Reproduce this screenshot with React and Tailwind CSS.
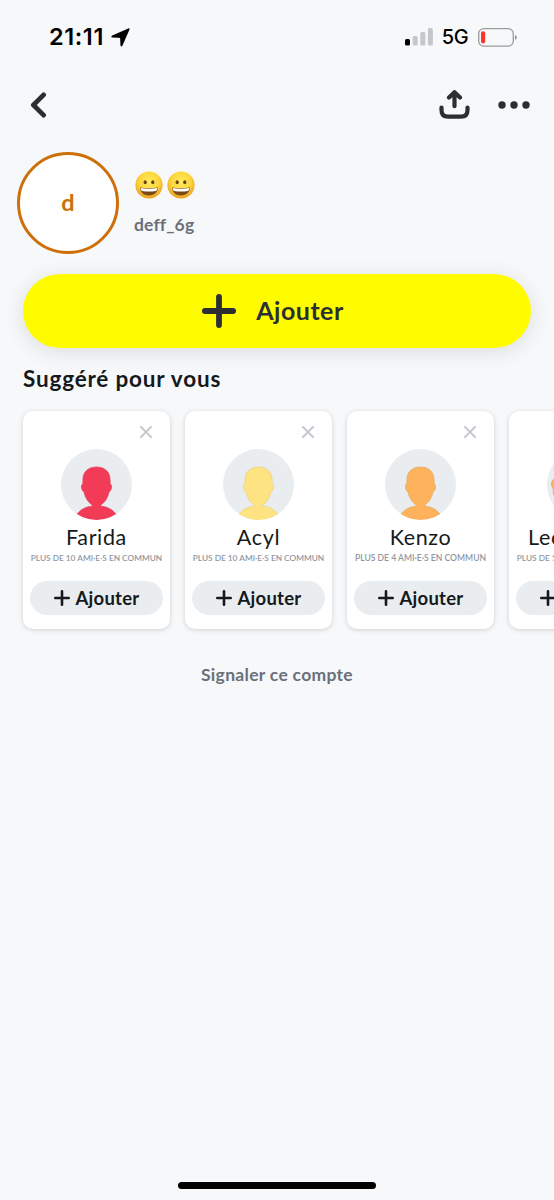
import React, { useState } from 'react';

const suggestions = [
  { name: 'Farida', common: 'PLUS DE 10 AMI·E·S EN COMMUN', size: 'text-[8.3px]', color: '#f23b57', edge: '#ee4560' },
  { name: 'Acyl', common: 'PLUS DE 10 AMI·E·S EN COMMUN', size: 'text-[8.3px]', color: '#fee382', edge: '#e9d48c' },
  { name: 'Kenzo', common: 'PLUS DE 4 AMI·E·S EN COMMUN', size: 'text-[8.6px]', color: '#feb25c', edge: '#e5ab6b' },
  { name: 'Leo Martin', common: 'PLUS DE 10 AMI·E·S EN COMMUN', size: 'text-[8.3px]', color: '#feb25c', edge: '#e5ab6b', hair: true },
];

function Emoji() {
  return (
    <svg className="h-7 w-7" viewBox="0 0 28 28">
      <defs>
        <radialGradient id="face" cx="50%" cy="38%" r="62%">
          <stop offset="0" stopColor="#ffee5c" />
          <stop offset="0.6" stopColor="#fdd53b" />
          <stop offset="1" stopColor="#eb9a1c" />
        </radialGradient>
      </defs>
      <circle cx="14" cy="14" r="13.6" fill="url(#face)" />
      <ellipse cx="10.2" cy="11.2" rx="1.6" ry="2" fill="#6d4217" />
      <ellipse cx="17.8" cy="11.2" rx="1.6" ry="2" fill="#6d4217" />
      <path d="M5 16.4Q14 18 23 16.4C22.6 21.6 19 24.4 14 24.4S5.4 21.6 5 16.4Z" fill="#7a4a16" />
      <path d="M5.6 16.9Q14 18.4 22.4 16.9C22.2 18.6 21.6 19.6 20.8 19.9Q14 21 7.2 19.9C6.4 19.6 5.8 18.6 5.6 16.9Z" fill="#fff" />
    </svg>
  );
}

function Silhouette({ color, edge, hair }) {
  return (
    <svg className="h-[71px] w-[71px] rounded-full bg-[#e9edf0]" viewBox="0 0 71 71">
      <g fill={color} stroke={edge} strokeWidth="0.8">
        {hair && <path d="M35.5 16C19 13 11 24 5 32.5C3.6 35 4.6 38 6 39L6.5 46C10 49 12 48 14 48L57 48C64 43 67 36 62 30C58 20 50 14 35.5 16Z" />}
        <path d="M35.5 18C26.5 18 21.9 23.5 21.9 31V35.2C20 35 20.2 38.5 21.2 41C21.9 42.6 22.6 42.3 23 43.2C24.3 49 27 53.3 31.2 56V57.2C25 57.6 18.5 60.5 15 67V74H56V67C52.5 60.5 46 57.6 39.8 57.2V56C44 53.3 46.7 49 48 43.2C48.4 42.3 49.1 42.6 49.8 41C50.8 38.5 51 35 49.1 35.2V31C49.1 23.5 44.5 18 35.5 18Z" />
      </g>
    </svg>
  );
}

function SuggestionCard({ person, onDismiss }) {
  return (
    <div className="flex h-[218px] w-[147px] shrink-0 flex-col items-center rounded-[10px] bg-white shadow-[0_1px_5px_rgba(0,0,0,0.16)]">
      <button className="mt-[15px] mr-[18px] self-end" onClick={onDismiss}>
        <svg className="h-3 w-3" viewBox="0 0 12 12" stroke="#c8cad2" strokeWidth="2.1" strokeLinecap="round">
          <path d="M1 1L11 11M11 1L1 11" />
        </svg>
      </button>
      <div className="mt-[11px]">
        <Silhouette color={person.color} edge={person.edge} hair={person.hair} />
      </div>
      <div className="mt-1 h-[26px] whitespace-nowrap text-[21.5px] leading-[26px] tracking-[0.65px] text-[#16191c]">{person.name}</div>
      <div className={`mt-0.5 h-3 whitespace-nowrap leading-3 font-semibold text-[#9297a2] ${person.size}`}>{person.common}</div>
      <button className="mt-[17px] flex h-[34px] w-[133px] items-center justify-center gap-1.5 rounded-full bg-[#e9edf0] text-[#16191c]">
        <svg className="h-4 w-4" viewBox="0 0 16 16" stroke="currentColor" strokeWidth="2.6" strokeLinecap="round">
          <path d="M8 1.3V14.7M1.3 8H14.7" />
        </svg>
        <span className="text-[18.5px] leading-6 font-bold tracking-[0.25px]">Ajouter</span>
      </button>
    </div>
  );
}

export default function App() {
  const [people, setPeople] = useState(suggestions);

  const dismiss = (name) => {
    setPeople((prev) => prev.filter((p) => p.name !== name));
  };

  return (
    <div className="flex h-[1200px] w-full flex-col overflow-hidden bg-[#f7f8fa] font-['Lato',sans-serif]">

      {/* Status bar */}
      <div className="flex h-[74px] items-center justify-between pr-[37px] pl-[49px] font-['Inter',sans-serif] text-black">
        <div className="flex items-center gap-[7px]">
          <span className="text-[23.5px] leading-7 font-semibold tracking-[0.6px]">21:11</span>
          <svg className="h-[19px] w-[19px]" viewBox="0 0 19 19">
            <path d="M17.2 .5Q19 -.1 18.4 1.8L11.5 17.4Q10.4 19.6 9.4 17.3L9.2 10.8Q9.1 9.9 8.2 9.8L1.5 9.6Q-.8 8.8 1.3 7.5Z" />
          </svg>
        </div>
        <div className="flex items-center">
          <svg className="h-[18px] w-7" viewBox="0 0 28 18">
            <rect x="0" y="11" width="5" height="6.6" rx="1.5" fill="#000" />
            <rect x="7.7" y="8" width="5" height="9.6" rx="1.5" fill="#c6c7c9" />
            <rect x="15.3" y="4" width="5" height="13.6" rx="1.5" fill="#c6c7c9" />
            <rect x="22.9" y="0" width="5" height="17.6" rx="1.5" fill="#c6c7c9" />
          </svg>
          <span className="ml-[9px] text-[20px] leading-6 font-medium tracking-[-0.3px]">5G</span>
          <svg className="ml-[9.5px] h-[19px] w-[39px]" viewBox="0 0 39 19">
            <rect x="0.7" y="0.7" width="34.6" height="17.4" rx="5" fill="none" stroke="#9b9c9e" strokeWidth="1.3" />
            <rect x="3" y="3.2" width="4.2" height="12.2" rx="1.8" fill="#fa352d" />
            <path d="M37 7Q38.8 7.6 38.8 9.4T37 11.8Z" fill="#8e8f91" />
          </svg>
        </div>
      </div>

      {/* Navigation */}
      <div className="flex h-[61px] items-center justify-between pr-6 pl-[30px] text-[#2b2f34]">
        <svg className="h-[26px] w-[17px]" viewBox="0 0 17 26" fill="none" stroke="currentColor" strokeWidth="4.8" strokeLinecap="round" strokeLinejoin="round">
          <path d="M13.6 2.9L3.4 13L13.6 23.1" />
        </svg>
        <div className="flex items-center gap-7">
          <svg className="h-[30px] w-[31px]" viewBox="0 0 31 30" fill="none" stroke="currentColor" strokeWidth="4.2" strokeLinecap="round" strokeLinejoin="round">
            <path d="M2.5 17.5V20Q2.5 26.7 9 26.7H22Q28.5 26.7 28.5 20V17.5" />
            <path d="M15.5 16.2V3.5M10 7.6L15.5 2.2L21 7.6" />
          </svg>
          <svg className="h-2 w-8" viewBox="0 0 32 8" fill="currentColor">
            <circle cx="4" cy="4" r="3.7" />
            <circle cx="16" cy="4" r="3.7" />
            <circle cx="28" cy="4" r="3.7" />
          </svg>
        </div>
      </div>

      {/* Profile */}
      <div className="mt-[17px] flex pl-[17px]">
        <div className="flex h-[102px] w-[102px] items-center justify-center rounded-full border-3 border-[#ce7009] bg-white text-[23.5px] font-bold text-[#ce7009]">
          d
        </div>
        <div className="ml-[15px] pt-[19px]">
          <div className="flex gap-[3.5px] pl-px">
            <Emoji />
            <Emoji />
          </div>
          <div className="mt-3.5 text-[17.5px] leading-6 font-bold tracking-[0.15px] text-[#69707c]">deff_6g</div>
        </div>
      </div>

      <button className="mx-[23px] mt-5 flex h-[74px] shrink-0 items-center justify-center gap-5 rounded-full bg-[#fffc00] pr-2 text-[#2b2f34] shadow-[0_4px_22px_rgba(0,0,0,0.11)]">
        <svg className="h-[34px] w-[34px]" viewBox="0 0 34 34" stroke="currentColor" strokeWidth="5.8" strokeLinecap="round">
          <path d="M17 2.9V31.1M2.9 17H31.1" />
        </svg>
        <span className="pb-0.5 text-[25px] leading-8 font-bold tracking-[0.5px]">Ajouter</span>
      </button>

      {/* Suggestions */}
      <h2 className="mt-[15px] pl-[23px] text-[22.5px] leading-8 font-bold tracking-[0.82px] text-[#16191c]">Suggéré pour vous</h2>
      <div className="mt-4 flex gap-[15px] pl-[23px]">
        {people.map((p) => (
          <SuggestionCard key={p.name} person={p} onDismiss={() => dismiss(p.name)} />
        ))}
      </div>

      <button className="mt-[34px] self-center text-[17.5px] leading-6 font-bold tracking-[0.3px] text-[#69707a]">Signaler ce compte</button>

      <div className="mt-auto mb-[11px] h-[7px] w-[198px] self-center rounded-full bg-black" />
    </div>
  );
}
